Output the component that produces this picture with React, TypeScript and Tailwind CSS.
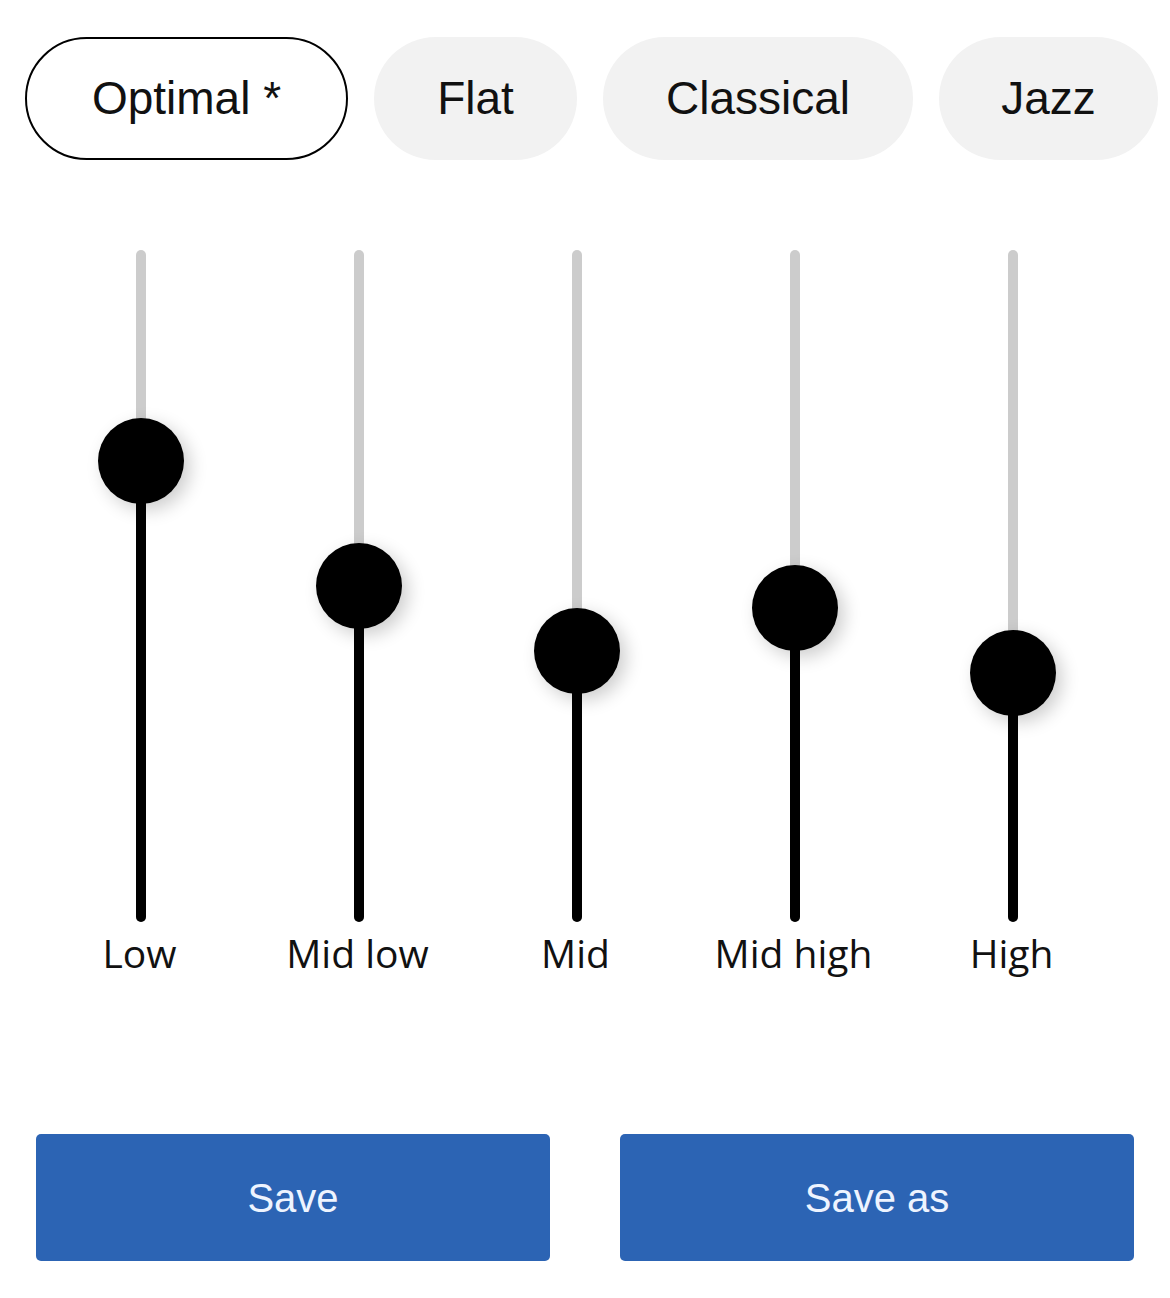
import React from "react";

const presets = [
  { name: "Optimal *", w: "w-[323px]", active: true },
  { name: "Flat", w: "w-[203px]", active: false },
  { name: "Classical", w: "w-[310px]", active: false },
  { name: "Jazz", w: "w-[219px]", active: false },
];

const bands = [
  { name: "Low", pos: 211 },
  { name: "Mid low", pos: 336 },
  { name: "Mid", pos: 401 },
  { name: "Mid high", pos: 358 },
  { name: "High", pos: 423 },
];

export default function App() {
  return (
    <div className="w-[1170px] h-[1298px] bg-white overflow-hidden">
      <div className="flex gap-[26px] pl-[25px] pt-[37px]">
        {presets.map((p) => (
          <div
            key={p.name}
            className={`${p.w} h-[123px] rounded-full flex items-center justify-center text-[46px] text-[#111] ${
              p.active ? "border-[2.5px] border-black bg-white" : "bg-[#f2f2f2]"
            }`}
            style={{ fontFamily: '"Liberation Sans", Arial, sans-serif' }}
          >
            {p.name}
          </div>
        ))}
      </div>

      <div className="flex pl-[32px] mt-[90px]">
        {bands.map((b) => (
          <div key={b.name} className="w-[218px] flex flex-col items-center">
            <div className="relative w-[10px] h-[672px]">
              <div className="absolute inset-0 rounded-full bg-[#cccccc]" />
              <div
                className="absolute left-0 right-0 bottom-0 rounded-b-full bg-black"
                style={{ top: b.pos }}
              />
              <div
                className="absolute left-1/2 w-[86px] h-[86px] -ml-[43px] -mt-[43px] rounded-full bg-black shadow-[6px_6px_18px_rgba(0,0,0,0.2)]"
                style={{ top: b.pos }}
              />
            </div>
            <div
              className="mt-[7px] h-[47px] leading-[47px] text-[39px] text-[#111] -ml-[3px]"
              style={{ fontFamily: '"Open Sans", "Noto Sans", sans-serif' }}
            >
              {b.name}
            </div>
          </div>
        ))}
      </div>

      <div className="flex gap-[70px] pl-[36px] mt-[158px]">
        {["Save", "Save as"].map((t) => (
          <button
            key={t}
            className="w-[514px] h-[127px] rounded-[5px] bg-[#2c64b4] text-[#eef4ff] text-[40px] flex items-center justify-center"
            style={{ fontFamily: '"Liberation Sans", Arial, sans-serif' }}
          >
            {t}
          </button>
        ))}
      </div>
    </div>
  );
}
